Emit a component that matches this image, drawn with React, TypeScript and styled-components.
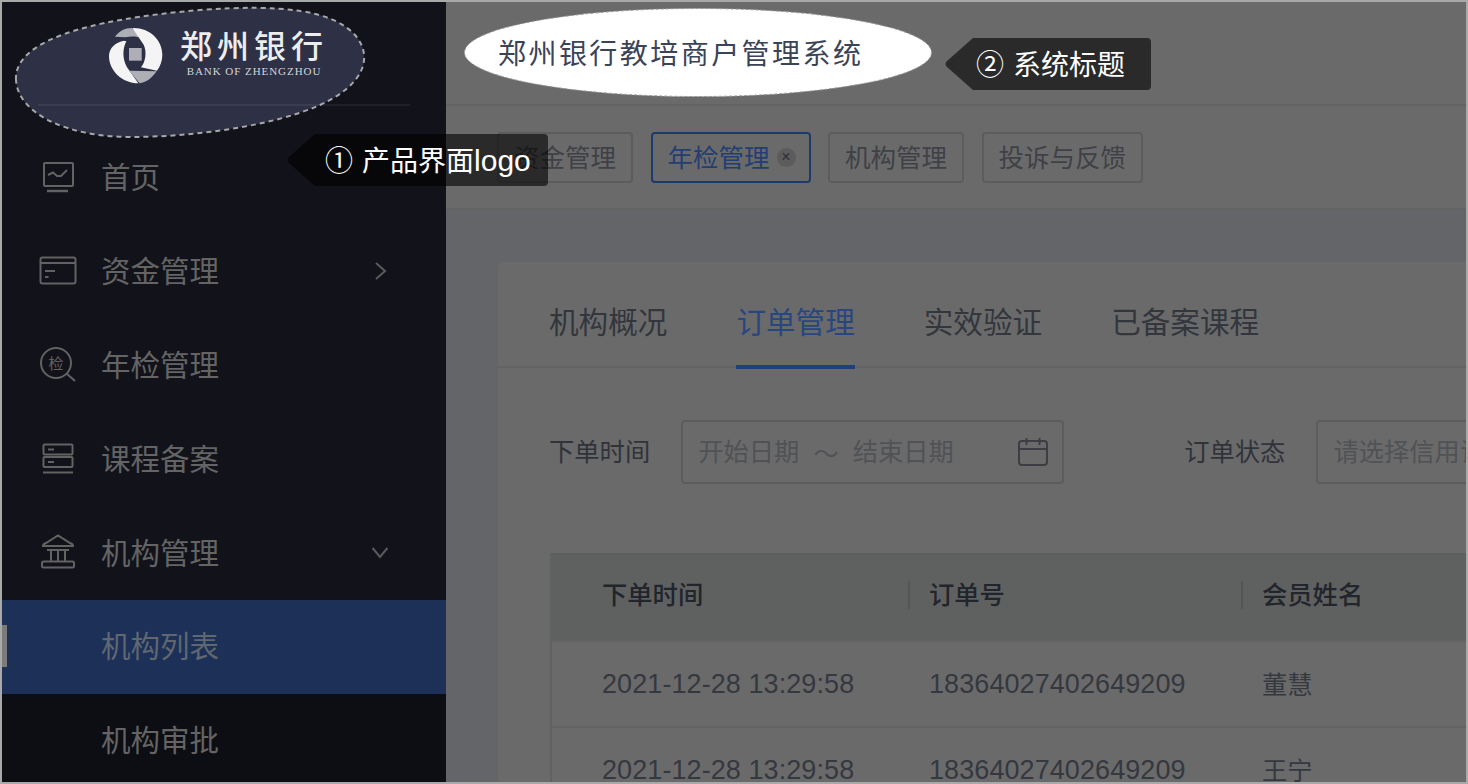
import React from "react";
import styled, { createGlobalStyle } from "styled-components";

const CJK = `"Noto Sans CJK SC", "Liberation Sans", sans-serif`;
const LATIN = `"Liberation Sans", "Noto Sans CJK SC", sans-serif`;

const Global = createGlobalStyle`
  html, body { margin: 0; padding: 0; background: #fff; }
  body { font-family: ${CJK}; }
  * { box-sizing: border-box; }
`;

const Frame = styled.div`
  position: relative;
  width: 1468px;
  height: 784px;
  border: 2px solid #a9a9a9;
  display: flex;
  overflow: hidden;
  background: #646569;
`;

const Sidebar = styled.aside`
  flex: none;
  width: 444px;
  height: 100%;
  background: #12131a;
  display: flex;
  flex-direction: column;
`;

const Brand = styled.div`
  position: relative;
  flex: none;
  height: 104px;
  padding: 22px 0 0 107px;
  display: flex;
  align-items: flex-start;
  gap: 17px;
`;

const BrandLine = styled.div`
  position: absolute;
  left: 36px;
  width: 372px;
  bottom: 0;
  height: 2px;
  background: rgba(255, 255, 255, 0.06);
`;

const BlobSvg = styled.svg`
  position: absolute;
  left: 0;
  top: 0;
  width: 380px;
  height: 145px;
  overflow: visible;
`;

const LogoMark = styled.svg`
  position: relative;
  flex: none;
  width: 62px;
  height: 62px;
  margin: 0 -4px 0 -4px;
`;

const BrandText = styled.div`
  position: relative;
  display: flex;
  flex-direction: column;
  align-items: center;
`;

const BrandName = styled.div`
  font-size: 32px;
  line-height: 40px;
  letter-spacing: 5px;
  font-weight: 500;
  color: #ededed;
  white-space: nowrap;
`;

const BrandEn = styled.div`
  font-family: "Liberation Serif", serif;
  font-size: 11px;
  line-height: 12px;
  letter-spacing: 0.95px;
  color: #d4d5d9;
  white-space: nowrap;
  margin-top: 1px;
`;

const Menu = styled.nav`
  flex: 1;
  padding-top: 24px;
  display: flex;
  flex-direction: column;
`;

const MenuItem = styled.div`
  flex: none;
  height: 94px;
  padding: 0 58px 0 37px;
  display: flex;
  align-items: center;
  gap: 24px;
  font-size: 29.5px;
  color: #646464;
  white-space: nowrap;
`;

const MenuLabel = styled.span`
  padding-bottom: 4px;
`;

const SubItem = styled.div<{ $active?: boolean }>`
  position: relative;
  flex: none;
  height: 94px;
  padding: 0 0 6px 99px;
  display: flex;
  align-items: center;
  font-size: 29.5px;
  white-space: nowrap;
  color: ${(p) => (p.$active ? "#5f6770" : "#646464")};
  background: ${(p) => (p.$active ? "#1c3058" : "#0d0e13")};
`;

const ActiveMark = styled.span`
  position: absolute;
  left: 0;
  top: 25px;
  width: 5px;
  height: 42px;
  background: #7b7b7b;
`;

const MenuIcon = styled.svg`
  flex: none;
  width: 38px;
  height: 38px;
  fill: none;
  stroke: #626262;
  stroke-width: 2;
`;

const Chevron = styled.svg`
  flex: none;
  margin-left: auto;
  width: 16px;
  height: 18px;
  fill: none;
  stroke: #5a5a5a;
  stroke-width: 2;
`;

const Main = styled.main`
  flex: 1;
  min-width: 0;
  height: 100%;
  display: flex;
  flex-direction: column;
`;

const Header = styled.header`
  position: relative;
  flex: none;
  height: 104px;
  padding: 0 0 2px 52px;
  display: flex;
  align-items: center;
  background: #6a6a6a;
  border-bottom: 2px solid #636363;
`;

const TitleBlob = styled.svg`
  position: absolute;
  left: 17px;
  top: 5px;
  width: 470px;
  height: 91px;
`;

const Title = styled.h1`
  position: relative;
  margin: 0;
  font-size: 28px;
  letter-spacing: 2.45px;
  font-weight: 400;
  color: #3b4357;
  white-space: nowrap;
`;

const TagBar = styled.div`
  flex: none;
  height: 104px;
  padding: 26px 0 0 51px;
  display: flex;
  align-items: flex-start;
  gap: 17.5px;
  background: #6a6a6a;
  border-bottom: 2px solid #636363;
`;

const Tag = styled.div<{ $active?: boolean }>`
  height: 51px;
  padding: 0 ${(p) => (p.$active ? "13px" : "15px")} 5px 15px;
  display: flex;
  align-items: center;
  gap: 7px;
  font-size: 25.5px;
  white-space: nowrap;
  border-radius: 4px;
  border: 2px solid ${(p) => (p.$active ? "#1d3a6c" : "#5c5c5c")};
  color: ${(p) => (p.$active ? "#223e72" : "#3f4147")};
`;

const TagClose = styled.span`
  flex: none;
  width: 19px;
  height: 19px;
  margin-top: 5px;
  border-radius: 50%;
  background: #5c5c5c;
  color: #2f3035;
  font-family: ${LATIN};
  font-size: 16px;
  line-height: 18px;
  text-align: center;
`;

const Card = styled.section`
  flex: 1;
  width: 1300px;
  margin: 52px 0 0 52px;
  background: #6a6a6a;
  border-radius: 6px 0 0 0;
`;

const Tabs = styled.div`
  height: 106px;
  padding-left: 51px;
  display: flex;
  gap: 69px;
  border-bottom: 2px solid #636363;
`;

const Tab = styled.div<{ $active?: boolean }>`
  height: 107px;
  padding-top: 34px;
  font-size: 29.6px;
  line-height: 50px;
  white-space: nowrap;
  color: ${(p) => (p.$active ? "#284680" : "#33363d")};
  border-bottom: 4px solid ${(p) => (p.$active ? "#20407c" : "transparent")};
`;

const Filters = styled.div`
  margin-top: 52px;
  padding-left: 51px;
  display: flex;
  align-items: center;
  font-size: 25.3px;
  white-space: nowrap;
`;

const FilterLabel = styled.label`
  color: #30333a;
  margin-right: 31px;
  padding-bottom: 4px;
`;

const DateField = styled.div`
  width: 383px;
  height: 64px;
  margin-right: 120px;
  padding: 0 13px 0 15px;
  display: flex;
  align-items: center;
  border: 2px solid #5c5c5c;
  border-radius: 4px;
  color: #505256;
`;

const DateText = styled.span`
  padding-bottom: 4px;
`;

const DateSep = styled.span`
  margin: 0 14px;
`;

const CalendarIcon = styled.svg`
  margin-left: auto;
  width: 32px;
  height: 32px;
  fill: none;
  stroke: #3c3e44;
  stroke-width: 2;
`;

const SelectField = styled.div`
  width: 300px;
  height: 64px;
  padding: 0 15px 4px;
  display: flex;
  align-items: center;
  border: 2px solid #5c5c5c;
  border-radius: 4px 0 0 4px;
  color: #505256;
`;

const Table = styled.div`
  margin: 69px 0 0 52px;
  border-left: 2px solid #606262;
  border-top: 2px solid #5c5f5f;
`;

const Row = styled.div<{ $head?: boolean }>`
  display: grid;
  grid-template-columns: 356px 333px 1fr;
  align-items: center;
  height: ${(p) => (p.$head ? "87px" : "86px")};
  padding-bottom: ${(p) => (p.$head ? "10px" : "0")};
  font-size: 25.3px;
  white-space: nowrap;
  background: ${(p) => (p.$head ? "#5f6161" : "transparent")};
  color: ${(p) => (p.$head ? "#22252b" : "#35383f")};
  font-weight: ${(p) => (p.$head ? 500 : 400)};
  border-bottom: 2px solid #636363;
`;

const Cell = styled.div<{ $first?: boolean; $divider?: boolean }>`
  position: relative;
  padding-left: ${(p) => (p.$first ? "50px" : "21px")};
  ${(p) =>
    p.$divider
      ? `&::before {
        content: "";
        position: absolute;
        left: 0;
        top: 50%;
        height: 28px;
        margin-top: -12px;
        width: 2px;
        background: #535656;
      }`
      : ""}
`;

const NumberCell = styled(Cell)`
  font-family: ${LATIN};
  font-size: 27px;
  letter-spacing: 0.08px;
`;

const NameCell = styled(Cell)`
  padding-bottom: 2px;
`;

const Callout = styled.div<{ $x: number; $y: number }>`
  position: absolute;
  left: ${(p) => p.$x}px;
  top: ${(p) => p.$y}px;
  height: 52px;
  display: flex;
  z-index: 5;
`;

const CalloutArrow = styled.svg`
  flex: none;
  width: 28px;
  height: 52px;
  fill: rgba(0, 0, 0, 0.6);
`;

const CalloutBody = styled.div<{ $left: number; $right: number }>`
  height: 52px;
  display: flex;
  align-items: center;
  gap: 9px;
  padding: 0 ${(p) => p.$right}px 3px ${(p) => p.$left}px;
  background: rgba(0, 0, 0, 0.6);
  border-radius: 0 4px 4px 0;
  color: #fff;
  font-family: ${LATIN};
  font-size: 28px;
  white-space: nowrap;
`;

const CalloutLatin = styled.span`
  font-size: 30px;
`;

const Arrow = () => (
  <CalloutArrow viewBox="0 0 28 52">
    <path d="M28 0 L2 23 Q-1 26 2 29 L28 52 Z" />
  </CalloutArrow>
);

const rows = [
  ["2021-12-28 13:29:58", "18364027402649209", "董慧"],
  ["2021-12-28 13:29:58", "18364027402649209", "王宁"],
];

export default function App() {
  return (
    <Frame>
      <Global />
      <Sidebar>
        <Brand>
          <BlobSvg viewBox="0 0 380 145">
            <path
              d="M14 78 C12 40 80 18 198 8 C280 2 330 8 353 33 C372 55 362 83 318 103 C268 125 188 135 128 135 C68 135 16 113 14 78 Z"
              fill="#2e3146"
              stroke="#a8a8a8"
              strokeWidth="2"
              strokeDasharray="5 4"
            />
          </BlobSvg>
          <LogoMark viewBox="0 0 186 186">
            <path d="M30 38 C42 22 60 12 80 12 L114 42 C92 36 76 36 62 40 Z" fill="#aeaeb6" />
            <path
              d="M82 12 C132 10 172 46 172 92 C172 110 166 126 156 140 L108 130 C122 112 126 84 116 62 Z"
              fill="#f4f4f4"
            />
            <path
              d="M56 50 C28 56 12 74 12 96 C12 140 52 178 100 178 L66 130 C52 104 52 76 64 52 Z"
              fill="#f4f4f4"
            />
            <path d="M72 140 L155 142 C140 164 122 176 104 178 Z" fill="#aeaeb6" />
            <rect x="72" y="72" width="38" height="38" fill="#aeaeb6" />
          </LogoMark>
          <BrandText>
            <BrandName>郑州银行</BrandName>
            <BrandEn>BANK OF ZHENGZHOU</BrandEn>
          </BrandText>
          <BrandLine />
        </Brand>
        <Menu>
          <MenuItem>
            <MenuIcon viewBox="0 0 38 38">
              <rect x="5" y="5" width="29" height="23" rx="1" />
              <path d="M9 17 L14 14.5 L18 18 L22 18 L28 12" />
              <path d="M8 33 H29" strokeWidth="2.5" />
            </MenuIcon>
            <MenuLabel>首页</MenuLabel>
          </MenuItem>
          <MenuItem>
            <MenuIcon viewBox="0 0 38 38">
              <rect x="1.5" y="5.5" width="35" height="26" rx="2" />
              <path d="M1.5 11 H36.5 M6 19 H16 M6 25 H9.5" />
            </MenuIcon>
            <MenuLabel>资金管理</MenuLabel>
            <Chevron viewBox="0 0 16 18">
              <path d="M4 1 L13 9 L4 17" />
            </Chevron>
          </MenuItem>
          <MenuItem>
            <MenuIcon viewBox="0 0 38 38">
              <circle cx="17" cy="17" r="15" />
              <path d="M27.5 27.5 L36 35" />
              <text x="17" y="23" textAnchor="middle" fontSize="15" fill="#626262" stroke="none">
                检
              </text>
            </MenuIcon>
            <MenuLabel>年检管理</MenuLabel>
          </MenuItem>
          <MenuItem>
            <MenuIcon viewBox="0 0 38 38">
              <rect x="4.5" y="4.5" width="29" height="10" rx="1" />
              <rect x="4.5" y="17" width="29" height="10" rx="1" />
              <path d="M9 9.5 H15 M9 22 H15 M4 32.5 H34" />
            </MenuIcon>
            <MenuLabel>课程备案</MenuLabel>
          </MenuItem>
          <MenuItem>
            <MenuIcon viewBox="0 0 38 38">
              <path d="M4 12 Q4 10 7 9 L19 1.5 L31 9 Q34 10 34 12 Z" />
              <path d="M8 16 H30 M12 16 V27 M19 16 V27 M26 16 V27" />
              <rect x="3" y="27.5" width="32" height="6" rx="1.5" />
            </MenuIcon>
            <MenuLabel>机构管理</MenuLabel>
            <Chevron viewBox="0 0 16 18">
              <path d="M0.5 4 L8 13 L15.5 4" />
            </Chevron>
          </MenuItem>
          <SubItem $active>
            <ActiveMark />
            机构列表
          </SubItem>
          <SubItem>机构审批</SubItem>
        </Menu>
      </Sidebar>
      <Main>
        <Header>
          <TitleBlob viewBox="0 0 470 91">
            <ellipse
              cx="235"
              cy="45.5"
              rx="233.5"
              ry="44"
              fill="#fff"
              stroke="#9a9a9a"
              strokeWidth="1"
              strokeDasharray="3 2"
            />
          </TitleBlob>
          <Title>郑州银行教培商户管理系统</Title>
        </Header>
        <TagBar>
          <Tag>资金管理</Tag>
          <Tag $active>
            年检管理
            <TagClose>×</TagClose>
          </Tag>
          <Tag>机构管理</Tag>
          <Tag>投诉与反馈</Tag>
        </TagBar>
        <Card>
          <Tabs>
            <Tab>机构概况</Tab>
            <Tab $active>订单管理</Tab>
            <Tab>实效验证</Tab>
            <Tab>已备案课程</Tab>
          </Tabs>
          <Filters>
            <FilterLabel>下单时间</FilterLabel>
            <DateField>
              <DateText>开始日期</DateText>
              <DateSep>～</DateSep>
              <DateText>结束日期</DateText>
              <CalendarIcon viewBox="0 0 32 32">
                <rect x="2" y="5" width="28" height="24" rx="3" />
                <path d="M2 13 H30 M9.5 2 V9 M22.5 2 V9" />
              </CalendarIcon>
            </DateField>
            <FilterLabel>订单状态</FilterLabel>
            <SelectField>请选择信用证状态</SelectField>
          </Filters>
          <Table>
            <Row $head>
              <Cell $first>下单时间</Cell>
              <Cell $divider>订单号</Cell>
              <Cell $divider>会员姓名</Cell>
            </Row>
            {rows.map((r) => (
              <Row key={r[2]}>
                <NumberCell $first>{r[0]}</NumberCell>
                <NumberCell>{r[1]}</NumberCell>
                <NameCell>{r[2]}</NameCell>
              </Row>
            ))}
          </Table>
        </Card>
      </Main>
      <Callout $x={285} $y={132}>
        <Arrow />
        <CalloutBody $left={10} $right={17}>
          <span>①</span>
          <span>
            产品界面<CalloutLatin>logo</CalloutLatin>
          </span>
        </CalloutBody>
      </Callout>
      <Callout $x={943} $y={36}>
        <Arrow />
        <CalloutBody $left={3} $right={26}>
          <span>②</span>
          <span>系统标题</span>
        </CalloutBody>
      </Callout>
    </Frame>
  );
}
